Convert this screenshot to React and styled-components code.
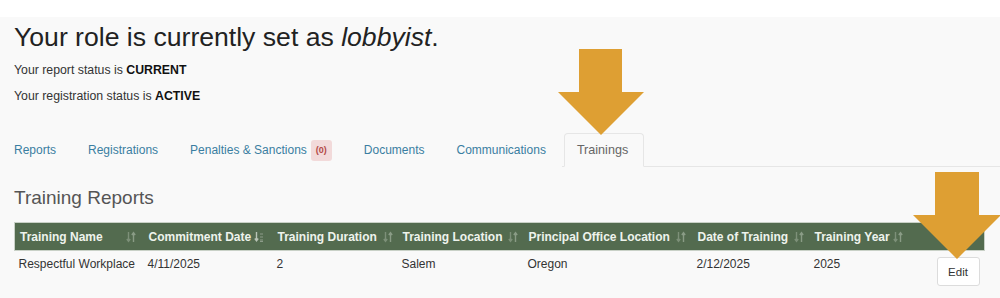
import styled, { createGlobalStyle } from "styled-components";

const GlobalStyle = createGlobalStyle`
  html, body {
    margin: 0;
    padding: 0;
    background: #f9f9f9;
    font-family: "Liberation Sans", Arial, sans-serif;
  }
`;

const Page = styled.div`
  position: relative;
  width: 1000px;
  height: 298px;
  overflow: hidden;
  background: #f9f9f9;
`;

const TopBand = styled.div`
  height: 17px;
  background: #ffffff;
`;

const Content = styled.div`
  padding: 0 16px 0 14px;
`;

const RoleHeading = styled.h1`
  margin: 4px 0 0;
  font-size: 26.6px;
  line-height: 32px;
  font-weight: 400;
  color: #222;

  em {
    font-style: italic;
  }
`;

const StatusLine = styled.p`
  margin: ${(p) => (p.$first ? "9px" : "10px")} 0 0;
  font-size: 12.3px;
  line-height: 16px;
  color: #333;

  b {
    font-weight: 700;
    color: #111;
  }
`;

const TabBar = styled.ul`
  display: flex;
  list-style: none;
  margin: 29px -16px 0 -14px;
  padding: 0;
  border-bottom: 1px solid #e6e6e6;
`;

const Tab = styled.li`
  display: flex;
  align-items: center;
  gap: 4px;
  height: 16px;
  padding: 8px 15px;
  margin-left: ${(p) => (p.$first ? "-2px" : "0")};
  margin-bottom: -1px;
  font-size: 12px;
  line-height: 16px;
  color: ${(p) => (p.$active ? "#666" : "#3a7ea1")};
  background: #f9f9f9;
  border: 1px solid ${(p) => (p.$active ? "#e6e6e6" : "transparent")};
  border-bottom-color: ${(p) => (p.$active ? "#f9f9f9" : "transparent")};
  border-radius: 4px 4px 0 0;
  ${(p) => (p.$active ? "padding: 8px 15px 8px 12px; margin-left: 2px; font-size: 12.6px;" : "")}
`;

const Badge = styled.span`
  display: inline-flex;
  align-items: center;
  justify-content: center;
  width: 21px;
  height: 21px;
  border-radius: 3px;
  background: #f2dada;
  color: #b24a48;
  font-size: 9px;
  font-weight: 700;
`;

const SectionTitle = styled.h2`
  margin: 19px 0 0;
  font-size: 19px;
  line-height: 24px;
  font-weight: 400;
  color: #555;
`;

const Table = styled.table`
  margin-top: 12px;
  width: 970px;
  border-collapse: collapse;
  table-layout: fixed;
`;

const HeadCell = styled.th`
  position: relative;
  padding: 5px 18px 5px 5px;
  height: 17px;
  background: #536b4f;
  border-top: 1px solid #c9d1c7;
  border-bottom: 1px solid #c9d1c7;
  color: #eef3ec;
  font-size: 12px;
  line-height: 16px;
  font-weight: 700;
  text-align: left;
  white-space: nowrap;

  &:first-child {
    border-left: 1px solid #c9d1c7;
  }
  &:last-child {
    border-right: 1px solid #c9d1c7;
  }

  svg {
    position: absolute;
    right: ${(p) => p.$iconRight || 8}px;
    top: 8px;
  }
`;

const Cell = styled.td`
  padding: 5px 4px 8px 4px;
  vertical-align: top;
  font-size: 12px;
  line-height: 16px;
  color: #333;
  white-space: nowrap;
  text-align: ${(p) => (p.$right ? "right" : "left")};
  ${(p) => (p.$right ? "padding: 5px 5px 4px 0;" : "")}
`;

const EditButton = styled.button`
  width: 43px;
  height: 29px;
  margin-top: 1px;
  border: 1px solid #dcdcdc;
  border-radius: 3px;
  background: #ffffff;
  font-family: inherit;
  font-size: 11.5px;
  color: #333;
  padding: 0;
`;

const Arrow = styled.svg`
  position: absolute;
  left: 0;
  top: 0;
  pointer-events: none;
`;

function SortIcon({ active }) {
  return (
    <svg width="10" height="12" viewBox="0 0 10 12">
      {active ? (
        <>
          <path d="M2.5 1v8M0.8 7.5l1.7 2.3 1.7-2.3" stroke="#b9c4b6" strokeWidth="1.4" fill="none" />
          <path d="M6 3h3M6 6h3M6 9h3M6 10.5h3" stroke="#8d9c8a" strokeWidth="1.2" fill="none" />
        </>
      ) : (
        <>
          <path d="M2.5 1v9M0.8 8l1.7 2.3 1.7-2.3" stroke="#7d9079" strokeWidth="1.4" fill="none" />
          <path d="M7.5 11V2M5.8 4l1.7-2.3 1.7 2.3" stroke="#8a9c86" strokeWidth="1.4" fill="none" />
        </>
      )}
    </svg>
  );
}

const columns = [
  { label: "Training Name", width: 129, right: 8 },
  { label: "Commitment Date", width: 129, right: 9, active: true },
  { label: "Training Duration", width: 125, right: 5 },
  { label: "Training Location", width: 126, right: 6 },
  { label: "Principal Office Location", width: 169, right: 7 },
  { label: "Date of Training", width: 117, right: 6 },
  { label: "Training Year", width: 99, right: 6 },
];

const row = ["Respectful Workplace", "4/11/2025", "2", "Salem", "Oregon", "2/12/2025", "2025"];

const tabs = ["Reports", "Registrations", "Penalties & Sanctions", "Documents", "Communications", "Trainings"];

export default function App() {
  return (
    <Page>
      <GlobalStyle />
      <TopBand />
      <Content>
        <RoleHeading>
          Your role is currently set as <em>lobbyist</em>.
        </RoleHeading>
        <StatusLine $first>
          Your report status is <b>CURRENT</b>
        </StatusLine>
        <StatusLine>
          Your registration status is <b>ACTIVE</b>
        </StatusLine>

        <TabBar>
          {tabs.map((t, i) => (
            <Tab key={t} $first={i === 0} $active={t === "Trainings"}>
              {t}
              {t === "Penalties & Sanctions" && <Badge>(0)</Badge>}
            </Tab>
          ))}
        </TabBar>

        <SectionTitle>Training Reports</SectionTitle>

        <Table>
          <colgroup>
            {columns.map((c) => (
              <col key={c.label} style={{ width: c.width }} />
            ))}
            <col style={{ width: 76 }} />
          </colgroup>
          <thead>
            <tr>
              {columns.map((c) => (
                <HeadCell key={c.label} $iconRight={c.right}>
                  {c.label}
                  <SortIcon active={c.active} />
                </HeadCell>
              ))}
              <HeadCell />
            </tr>
          </thead>
          <tbody>
            <tr>
              {row.map((v, i) => (
                <Cell key={i}>{v}</Cell>
              ))}
              <Cell $right>
                <EditButton>Edit</EditButton>
              </Cell>
            </tr>
          </tbody>
        </Table>
      </Content>

      <Arrow width="1000" height="298" viewBox="0 0 1000 298">
        <polygon
          points="579,49 622,49 622,92 644,92 601,135 558,92 579,92"
          fill="#de9f33"
        />
        <polygon
          points="935,172 979,172 979,215 1001,215 957,259 913,215 935,215"
          fill="#de9f33"
        />
      </Arrow>
    </Page>
  );
}
